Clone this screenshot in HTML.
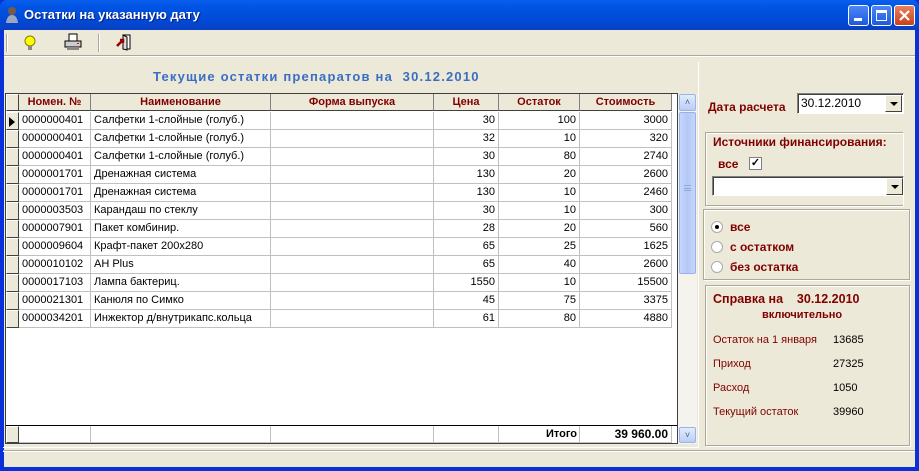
<!DOCTYPE html>
<html><head><meta charset="utf-8"><style>
*{box-sizing:border-box;margin:0;padding:0}
body{width:919px;height:471px;overflow:hidden;background:#0831D9;font-family:"Liberation Sans",Tahoma,sans-serif;font-size:11px;position:relative}
.a{position:absolute}
#title{left:0;top:0;width:919px;height:30px;background:linear-gradient(#0A5FEF,#0055E5 20%,#0049D6 70%,#0A3FC0);border-radius:7px 7px 0 0}
#client{left:4px;top:30px;width:911px;height:437px;background:#ECE9D8}
.tb{width:21px;height:21px;border-radius:3px;border:1px solid #fff;background:linear-gradient(#4C86F7,#1D5BDD);}
.hd{top:94px;height:17px;background:#ECE9D8;border-right:1px solid #808080;border-bottom:1px solid #404040;color:#800000;font-weight:bold;text-align:center;line-height:17px;font-size:11px}
.cell{height:18px;border-right:1px solid #C0C0C0;border-bottom:1px solid #C0C0C0;line-height:17px;padding:0 3px;white-space:nowrap;overflow:hidden;background:#fff}
.r{text-align:right}
.ind{background:#ECE9D8;border-right:1px solid #404040;border-bottom:1px solid #404040;border-top:1px solid #fff;border-left:1px solid #fff}
.red{color:#800000}
.b{font-weight:bold}
.grp{border:1px solid #ACA899;box-shadow:1px 1px 0 #fff inset,1px 1px 0 #fff}
</style></head><body>
<div id="title" class="a">
 <div class="a" style="left:5px;top:6px;width:14px;height:18px"><svg width="14" height="18"><circle cx="7" cy="5" r="4" fill="#7a5a44"/><path d="M1 17 Q2 9 7 9 Q12 9 13 17Z" fill="#9aa8c0"/></svg></div>
 <div class="a" style="left:24px;top:7px;color:#fff;font-size:13px;font-weight:bold;text-shadow:1px 1px #0a1f7a">Остатки на указанную дату</div>
 <div class="a tb" style="left:848px;top:5px"><div class="a" style="left:5px;top:12px;width:8px;height:3px;background:#fff"></div></div>
 <div class="a tb" style="left:871px;top:5px"><div class="a" style="left:4px;top:4px;width:11px;height:11px;border:1px solid #fff;border-top-width:3px"></div></div>
 <div class="a tb" style="left:894px;top:5px;background:linear-gradient(#E8805F,#C8401B)"><svg class="a" style="left:3px;top:3px" width="13" height="13"><path d="M2 2L11 11M11 2L2 11" stroke="#fff" stroke-width="2.2"/></svg></div>
</div>
<div id="client" class="a">
 <div class="a" style="left:2px;top:4px;width:2px;height:18px;border-left:1px solid #ACA899;border-right:1px solid #fff"></div>
 <svg class="a" style="left:18px;top:4px" width="16" height="18"><circle cx="8" cy="7" r="5" fill="#ffff00" stroke="#808000"/><rect x="6" y="12" width="4" height="4" fill="#888"/></svg>
 <svg class="a" style="left:60px;top:3px" width="18" height="18"><rect x="5" y="1" width="8" height="7" fill="#fff" stroke="#000"/><rect x="1" y="8" width="16" height="6" fill="#ccc" stroke="#000"/><rect x="3" y="14" width="12" height="3" fill="#888"/><rect x="13" y="10" width="2" height="1" fill="red"/></svg>
 <div class="a" style="left:94px;top:4px;width:2px;height:18px;border-left:1px solid #ACA899;border-right:1px solid #fff"></div>
 <svg class="a" style="left:112px;top:3px" width="16" height="18"><path d="M7 2H14V16H7Z" fill="#fff" stroke="#000"/><path d="M7 2L11 4V17L7 16Z" fill="#ddd" stroke="#000"/><path d="M1 13L7 7M4 7H7V10" stroke="#900" stroke-width="2.5" fill="none"/></svg>
 <div class="a" style="left:0;top:25px;width:911px;height:2px;border-top:1px solid #ACA899;border-bottom:1px solid #fff"></div>
 <div class="a" style="left:149px;top:39px;color:#3A6EC5;font-weight:bold;font-size:13px;letter-spacing:1.2px">Текущие остатки препаратов на&nbsp; 30.12.2010</div>
 <div class="a" style="left:-1px;top:32px;width:696px;height:386px;border-right:1px solid #fff;border-bottom:1px solid #fff"></div>
 <div class="a" style="left:-1px;top:420px;width:912px;height:2px;border-top:1px solid #ACA899;border-bottom:1px solid #fff"></div>
</div>
<div class="a" style="left:5px;top:93px;width:673px;height:351px;background:#fff;border:1px solid #404040"></div>
<div class="a hd ind" style="left:6px;width:13px"></div>
<div class="a hd" style="left:19px;width:72px">Номен. №</div>
<div class="a hd" style="left:91px;width:180px">Наименование</div>
<div class="a hd" style="left:271px;width:163px">Форма выпуска</div>
<div class="a hd" style="left:434px;width:65px">Цена</div>
<div class="a hd" style="left:499px;width:81px">Остаток</div>
<div class="a hd" style="left:580px;width:92px">Стоимость</div>
<div id="rows"></div>
<div class="a" style="left:6px;top:425px;width:671px;height:1px;background:#000"></div>
<div class="a cell ind" style="left:6px;top:426px;width:13px;height:17px"></div>
<div class="a cell" style="left:19px;top:426px;width:72px;height:17px"></div>
<div class="a cell" style="left:91px;top:426px;width:180px;height:17px"></div>
<div class="a cell" style="left:271px;top:426px;width:163px;height:17px"></div>
<div class="a cell" style="left:434px;top:426px;width:65px;height:17px"></div>
<div class="a cell r b" style="left:499px;top:426px;width:81px;height:17px;padding-right:2px">Итого</div>
<div class="a cell r b" style="left:580px;top:426px;width:92px;height:17px;font-size:12px">39 960.00</div>
<div class="a" style="left:678px;top:94px;width:19px;height:350px;background:#F4F3EE"></div>
<div class="a" style="left:679px;top:94px;width:17px;height:17px;background:linear-gradient(#E2EBFE,#B9CEF7);border:1px solid #9CB3E8;border-radius:2px;color:#4D6185;font-size:9px;text-align:center;line-height:15px">&#x2C4;</div>
<div class="a" style="left:679px;top:112px;width:17px;height:162px;background:linear-gradient(90deg,#C6D6FA,#B3C8F5,#C6D6FA);border:1px solid #98B1E8;border-radius:2px"><div style="margin:72px auto 0;width:7px;height:6px;border-top:1px solid #8EA7DC;border-bottom:1px solid #8EA7DC;position:relative"><div style="position:absolute;top:2px;width:7px;border-top:1px solid #8EA7DC"></div></div></div>
<div class="a" style="left:679px;top:427px;width:17px;height:16px;background:linear-gradient(#E2EBFE,#B9CEF7);border:1px solid #9CB3E8;border-radius:2px;color:#4D6185;font-size:9px;text-align:center;line-height:14px">&#x2C5;</div>
<div class="a red b" style="left:708px;top:100px;font-size:12px">Дата расчета</div>
<div class="a" style="left:797px;top:93px;width:107px;height:21px;background:#fff;border:1px solid #7F9DB9;border-color:#808080 #fff #fff #808080;box-shadow:inset 1px 1px #404040"></div>
<div class="a" style="left:801px;top:96px;font-size:12px">30.12.2010</div>
<div class="a" style="left:885px;top:95px;width:17px;height:17px;background:#ECE9D8;border:1px solid;border-color:#fff #404040 #404040 #fff"><div style="margin:6px auto 0;width:0;height:0;border:4px solid transparent;border-top:4px solid #000;border-bottom:0"></div></div>
<div class="a grp" style="left:705px;top:132px;width:198px;height:74px;border-right:0"></div>
<div class="a red b" style="left:713px;top:135px;font-size:12px">Источники финансирования:</div>
<div class="a red b" style="left:718px;top:157px;font-size:12px">все</div>
<div class="a" style="left:749px;top:157px;width:13px;height:13px;background:#fff;border:1px solid #808080;font-size:11px;line-height:11px;text-align:center;font-weight:bold">&#x2713;</div>
<div class="a" style="left:712px;top:176px;width:192px;height:20px;background:#fff;border:1px solid;border-color:#808080 #fff #fff #808080;box-shadow:inset 1px 1px #404040"></div>
<div class="a" style="left:886px;top:178px;width:17px;height:17px;background:#ECE9D8;border:1px solid;border-color:#fff #404040 #404040 #fff"><div style="margin:6px auto 0;width:0;height:0;border:4px solid transparent;border-top:4px solid #000;border-bottom:0"></div></div>
<div class="a grp" style="left:703px;top:209px;width:207px;height:71px"></div>
<div class="a" style="left:711px;top:221px;width:12px;height:12px;border-radius:50%;background:#fff;border:1px solid #aaa"><div style="width:4px;height:4px;background:#000;border-radius:50%;margin:3px"></div></div>
<div class="a" style="left:711px;top:241px;width:12px;height:12px;border-radius:50%;background:#fff;border:1px solid #aaa"></div>
<div class="a" style="left:711px;top:261px;width:12px;height:12px;border-radius:50%;background:#fff;border:1px solid #aaa"></div>
<div class="a red b" style="left:730px;top:220px;font-size:12px">все</div>
<div class="a red b" style="left:730px;top:240px;font-size:12px">с остатком</div>
<div class="a red b" style="left:730px;top:260px;font-size:12px">без остатка</div>
<div class="a grp" style="left:705px;top:285px;width:205px;height:161px"></div>
<div class="a red b" style="left:713px;top:292px;font-size:12.5px">Справка на&nbsp;&nbsp;&nbsp; 30.12.2010</div>
<div class="a red b" style="left:762px;top:309px;font-size:11px">включительно</div>
<div class="a red" style="left:713px;top:334px">Остаток на 1 января</div><div class="a" style="left:833px;top:334px">13685</div>
<div class="a red" style="left:713px;top:358px">Приход</div><div class="a" style="left:833px;top:358px">27325</div>
<div class="a red" style="left:713px;top:382px">Расход</div><div class="a" style="left:833px;top:382px">1050</div>
<div class="a red" style="left:713px;top:406px">Текущий остаток</div><div class="a" style="left:833px;top:406px">39960</div>
<script>
var d=[["0000000401","Салфетки 1-слойные (голуб.)",30,100,3000],["0000000401","Салфетки 1-слойные (голуб.)",32,10,320],["0000000401","Салфетки 1-слойные (голуб.)",30,80,2740],["0000001701","Дренажная система",130,20,2600],["0000001701","Дренажная система",130,10,2460],["0000003503","Карандаш по стеклу",30,10,300],["0000007901","Пакет комбинир.",28,20,560],["0000009604","Крафт-пакет 200x280",65,25,1625],["0000010102","AH Plus",65,40,2600],["0000017103","Лампа бактериц.",1550,10,15500],["0000021301","Канюля по Симко",45,75,3375],["0000034201","Инжектор д/внутрикапс.кольца",61,80,4880]];
var h="";
d.forEach(function(r,i){var y=112+i*18;
h+='<div class="a cell ind" style="left:6px;top:'+y+'px;width:13px">'+(i==0?'<div style="margin-top:4px;width:0;height:0;border-left:6px solid #000;border-top:5px solid transparent;border-bottom:5px solid transparent;margin-left:-1px"></div>':'')+'</div>';
h+='<div class="a cell" style="left:19px;top:'+y+'px;width:72px">'+r[0]+'</div>';
h+='<div class="a cell" style="left:91px;top:'+y+'px;width:180px">'+r[1]+'</div>';
h+='<div class="a cell" style="left:271px;top:'+y+'px;width:163px"></div>';
h+='<div class="a cell r" style="left:434px;top:'+y+'px;width:65px">'+r[2]+'</div>';
h+='<div class="a cell r" style="left:499px;top:'+y+'px;width:81px">'+r[3]+'</div>';
h+='<div class="a cell r" style="left:580px;top:'+y+'px;width:92px">'+r[4]+'</div>';});
document.getElementById("rows").innerHTML=h;
</script>
</body></html>
